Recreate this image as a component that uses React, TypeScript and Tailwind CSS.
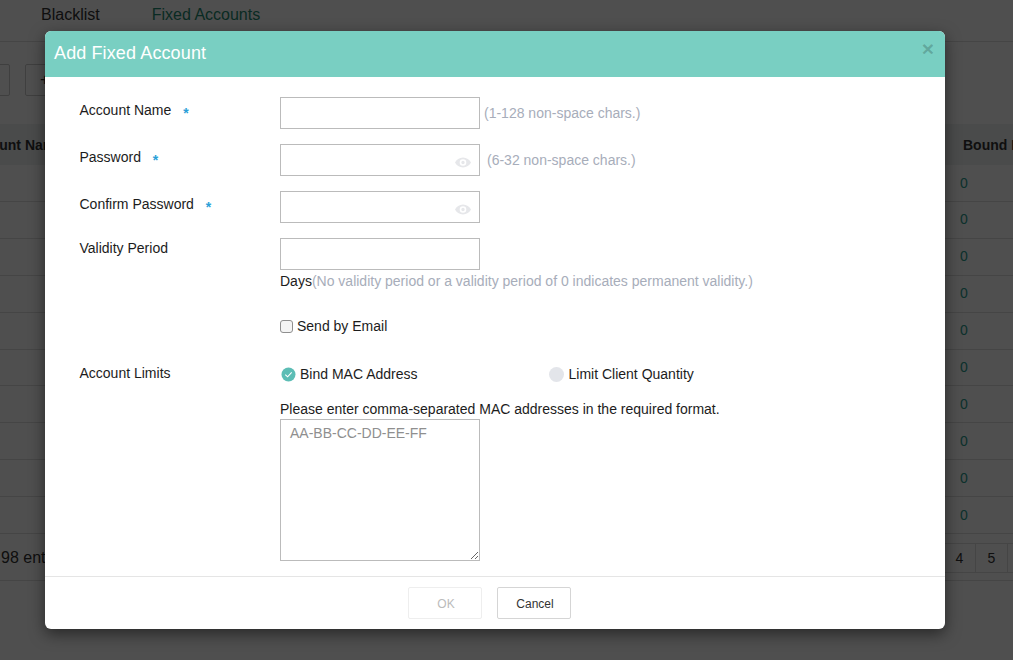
import React from "react";

function EyeIcon() {
  return (
    <svg width="16" height="11" viewBox="0 0 16 11" className="absolute right-[8px] top-[12px]">
      <path fillRule="evenodd" fill="#e6e7ea" d="M8 0.5C11.6 0.5 14.6 2.7 16 5.5C14.6 8.3 11.6 10.5 8 10.5C4.4 10.5 1.4 8.3 0 5.5C1.4 2.7 4.4 0.5 8 0.5ZM8 2.2A3.3 3.3 0 1 0 8 8.8A3.3 3.3 0 1 0 8 2.2ZM8 3.8A1.7 1.7 0 1 1 8 7.2A1.7 1.7 0 1 1 8 3.8Z" />
    </svg>
  );
}

function Star() {
  return <span className="ml-[8px] inline-block align-[-3px] text-[14px] font-bold leading-[14px] text-[#2b9fd8]">*</span>;
}

const rows = [0, 1, 2, 3, 4, 5, 6, 7, 8, 9];

export default function App() {
  return (
    <div className="relative h-[660px] w-[1013px] overflow-hidden bg-white font-['Liberation_Sans',Arial,sans-serif] text-[14px] text-[#333]">
      {/* Page behind the dialog */}
      <div className="flex h-[42px] items-start gap-[52px] border-b border-[#ddd] pl-[41px] pt-[6px] text-[16px] leading-[18px]">
        <span>Blacklist</span>
        <span className="text-[#1f8a70]">Fixed Accounts</span>
      </div>
      <div className="flex h-[82px] items-start gap-[15px] pt-[22px]">
        <div className="ml-[-20px] h-[32px] w-[30px] rounded-[2px] border border-[#ccc]" />
        <div className="flex h-[32px] w-[60px] items-center rounded-[2px] border border-[#ccc] pl-[14px] text-[16px]">+</div>
      </div>
      <div className="flex h-[41.1px] items-center justify-between bg-[#eef1f3] pt-[2px] font-bold">
        <span className="ml-[-35px] whitespace-nowrap">Account Name</span>
        <span className="w-[50px] whitespace-nowrap">Bound MAC</span>
      </div>
      {rows.map((r) => (
        <div key={r} className="flex h-[36.9px] items-center justify-end border-b border-[#ddd]">
          <span className="w-[53px] text-[#2a9d8f]">0</span>
        </div>
      ))}
      <div className="flex h-[46.9px] items-start justify-between border-b border-[#ddd] pt-[9px]">
        <span className="ml-[1px] mt-[5px] text-[16px] leading-[20px]">98 entries</span>
        <div className="flex h-[30px] items-center border-y border-[#ddd] text-[14px]">
          <span className="flex h-[30px] w-[32px] items-center justify-center border-r border-[#ddd]">4</span>
          <span className="flex h-[30px] w-[32px] items-center justify-center border-r border-[#ddd]">5</span>
          <span className="w-[5px]" />
        </div>
      </div>

      {/* Backdrop */}
      <div className="absolute inset-0 bg-black/[0.69]" />

      {/* Dialog */}
      <div className="absolute left-[45px] top-[31px] flex h-[598px] w-[900px] flex-col overflow-hidden rounded-[6px] bg-white shadow-[0_5px_15px_rgba(0,0,0,0.5)]">
        <div className="flex h-[46px] shrink-0 items-start justify-between bg-[#79cfc2] pl-[9px] pr-[11px]">
          <span className="mt-[11px] text-[18px] leading-[22px] tracking-[0.12px] text-white">Add Fixed Account</span>
          <span className="mt-[7px] text-[21px] font-bold leading-[21px] text-black/20">×</span>
        </div>

        <div className="flex flex-1 flex-col pl-[34.5px] pt-[20px] text-[14px] leading-[20px] text-[#1c1c1c]">
          <div className="flex h-[32px] items-start">
            <span className="w-[200.5px] pt-[3px]">Account Name <Star /></span>
            <div className="h-[32px] w-[200px] border border-[#bbb]" />
            <span className="ml-[4px] pt-[6px] text-[#a7adba]">(1-128 non-space chars.)</span>
          </div>
          <div className="mt-[15px] flex h-[32px] items-start">
            <span className="w-[200.5px] pt-[3px]">Password <Star /></span>
            <div className="relative h-[32px] w-[200px] border border-[#bbb]"><EyeIcon /></div>
            <span className="ml-[7px] pt-[6px] text-[#a7adba]">(6-32 non-space chars.)</span>
          </div>
          <div className="mt-[15px] flex h-[32px] items-start">
            <span className="w-[200.5px] pt-[3px]">Confirm Password <Star /></span>
            <div className="relative h-[32px] w-[200px] border border-[#bbb]"><EyeIcon /></div>
          </div>
          <div className="mt-[15px] flex items-start">
            <span className="w-[200.5px]">Validity Period</span>
            <div>
              <div className="h-[32px] w-[200px] border border-[#bbb]" />
              <div className="mt-[1px] whitespace-nowrap">Days<span className="text-[#a7adba]">(No validity period or a validity period of 0 indicates permanent validity.)</span></div>
            </div>
          </div>
          <div className="ml-[200.5px] mt-[25px] flex h-[20px] items-center">
            <span className="h-[13px] w-[13px] rounded-[3px] border border-[#8f8f8f] bg-[#f4f4f4]" />
            <span className="ml-[4px]">Send by Email</span>
          </div>
          <div className="mt-[28px] flex h-[20px] items-center">
            <span className="mt-[-2px] w-[200.5px]">Account Limits</span>
            <svg width="15" height="15" viewBox="0 0 15 15" className="ml-[1px] shrink-0">
              <circle cx="7.5" cy="7.5" r="7" fill="#5cbdb5" />
              <path d="M4.3 7.6 L6.6 9.8 L10.7 5.4" fill="none" stroke="#fff" strokeWidth="1.1" />
            </svg>
            <span className="ml-[4px] w-[249px]">Bind MAC Address</span>
            <span className="h-[15px] w-[15px] shrink-0 rounded-full bg-[#e3e5ea]" />
            <span className="ml-[4.5px]">Limit Client Quantity</span>
          </div>
          <div className="ml-[200.5px] mt-[15px] whitespace-nowrap">Please enter comma-separated MAC addresses in the required format.</div>
          <textarea
            readOnly
            placeholder="AA-BB-CC-DD-EE-FF"
            className="ml-[200.5px] block h-[142px] w-[200px] rounded-none border border-[#bbb] px-[9px] py-[3px] text-[14px] leading-[20px] placeholder:text-[#8f8f8f]"
          />
        </div>

        <div className="flex h-[53px] shrink-0 items-start justify-center gap-[15px] border-t border-[#e5e5e5] pr-[12px] pt-[10px] text-[12px]">
          <div className="flex h-[32px] w-[74px] items-center justify-center rounded-[2px] border border-[#eee] pl-[3px] pt-[1px] text-[#bbb]">OK</div>
          <div className="flex h-[32px] w-[74px] items-center justify-center rounded-[2px] border border-[#d5d5d5] pl-[3px] pt-[1px] text-[#333]">Cancel</div>
        </div>
      </div>
    </div>
  );
}
